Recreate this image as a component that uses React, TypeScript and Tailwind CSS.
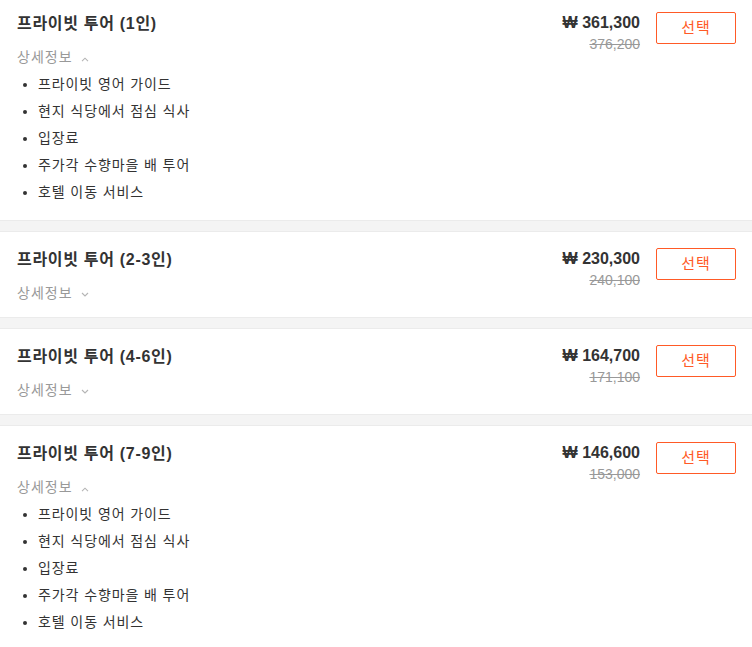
import type { ReactNode } from 'react'

type Option = {
  title: string
  price: string
  original: string
  open: boolean
}

const includes = [
  '프라이빗 영어 가이드',
  '현지 식당에서 점심 식사',
  '입장료',
  '주가각 수향마을 배 투어',
  '호텔 이동 서비스',
]

const options: Option[] = [
  { title: '프라이빗 투어 (1인)', price: '361,300', original: '376,200', open: true },
  { title: '프라이빗 투어 (2-3인)', price: '230,300', original: '240,100', open: false },
  { title: '프라이빗 투어 (4-6인)', price: '164,700', original: '171,100', open: false },
  { title: '프라이빗 투어 (7-9인)', price: '146,600', original: '153,000', open: true },
]

function Chevron({ up }: { up: boolean }) {
  return (
    <svg width="8" height="5" viewBox="0 0 8 5" className={up ? 'mt-[4px]' : 'mt-[3px]'}>
      <path
        d={up ? 'M1 4.2 L4 1.2 L7 4.2' : 'M1 1 L4 4 L7 1'}
        fill="none"
        stroke="#b5b5b5"
        strokeWidth="1.1"
      />
    </svg>
  )
}

function Card({ option, first, children }: { option: Option; first?: boolean; children?: ReactNode }) {
  return (
    <div
      className={
        'bg-white border-y border-[#ebebeb] flex pl-[17px] pr-[16px] pt-[17px] pb-[14px] ' +
        (first ? '-mt-[4px] border-t-0' : '')
      }
    >
      <div className="flex-1 min-w-0">
        <div className="text-[16px] leading-[22px] font-bold text-[#333] tracking-[0.7px]">{option.title}</div>
        <button className="mt-[12px] flex items-center gap-[8px] text-[14px] leading-[20px] text-[#999] tracking-[1px]">
          상세정보
          <Chevron up={option.open} />
        </button>
        {option.open && children}
      </div>
      <div className="flex items-start gap-[16px]">
        <div className="text-right pt-[1px]">
          <div className="text-[16px] leading-[18px] font-bold text-[#333]">₩ {option.price}</div>
          <div className="mt-[3px] text-[14px] leading-[18px] text-[#999] line-through">{option.original}</div>
        </div>
        <button className="-mt-[1px] w-[80px] h-[32px] border border-[#ff5a26] rounded-[2px] text-[15px] text-[#ff5a26] bg-white tracking-[1px]">
          선택
        </button>
      </div>
    </div>
  )
}

function Includes() {
  return (
    <ul className="mt-[4px]">
      {includes.map((item) => (
        <li key={item} className="flex items-center text-[14px] leading-[27px] text-[#333] tracking-[0.9px]">
          <span className="ml-[6px] mr-[11px] w-[4px] h-[4px] rounded-full bg-[#333]" />
          {item}
        </li>
      ))}
    </ul>
  )
}

export default function App() {
  return (
    <div
      className="h-[647px] overflow-hidden bg-[#f4f4f4] flex flex-col gap-[10px]"
      style={{ fontFamily: '"Liberation Sans", "Noto Sans CJK KR", sans-serif' }}
    >
      {options.map((o, i) => (
        <Card key={o.title} option={o} first={i === 0}>
          <Includes />
        </Card>
      ))}
    </div>
  )
}
